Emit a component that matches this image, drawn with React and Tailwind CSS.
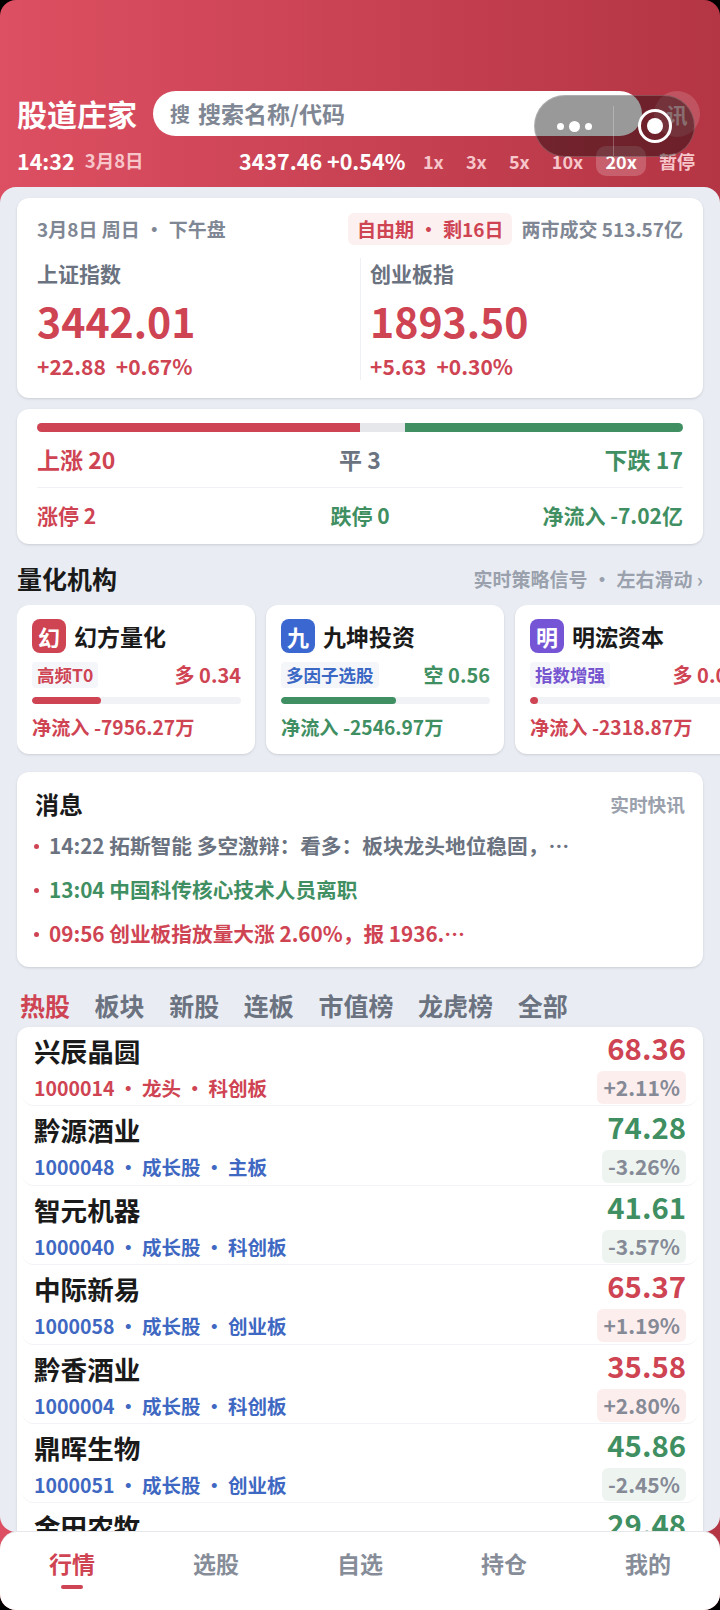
import React from 'react';

const RED = 'text-[#cf4453]';
const GREEN = 'text-[#3f8f62]';

const speeds = ['1x', '3x', '5x', '10x', '20x', '暂停'];

const funds = [
  { icon: '幻', iconBg: 'bg-[#cf4453]', name: '幻方量化', tag: '高频T0', tagText: 'text-[#cf4453]', signal: '多 0.34', signalText: RED, barBg: 'bg-[#cf4453]', bar: '33%', flow: '净流入 -7956.27万', flowText: RED },
  { icon: '九', iconBg: 'bg-[#3b68d0]', name: '九坤投资', tag: '多因子选股', tagText: 'text-[#3b68c4]', signal: '空 0.56', signalText: GREEN, barBg: 'bg-[#3f8f62]', bar: '55%', flow: '净流入 -2546.97万', flowText: GREEN },
  { icon: '明', iconBg: 'bg-[#7555d6]', name: '明浤资本', tag: '指数增强', tagText: 'text-[#7555d0]', signal: '多 0.08', signalText: RED, barBg: 'bg-[#cf4453]', bar: '4%', flow: '净流入 -2318.87万', flowText: RED },
];

const news = [
  { text: '14:22 拓斯智能 多空激辩：看多：板块龙头地位稳固，…', color: 'text-[#6b7280]' },
  { text: '13:04 中国科传核心技术人员离职', color: GREEN },
  { text: '09:56 创业板指放量大涨 2.60%，报 1936.…', color: RED },
];

const tabs = ['热股', '板块', '新股', '连板', '市值榜', '龙虎榜', '全部'];

const stocks = [
  { name: '兴辰晶圆', code: '1000014', tags: ['龙头', '科创板'], price: '68.36', pct: '+2.11%', up: true, lead: true },
  { name: '黔源酒业', code: '1000048', tags: ['成长股', '主板'], price: '74.28', pct: '-3.26%', up: false },
  { name: '智元机器', code: '1000040', tags: ['成长股', '科创板'], price: '41.61', pct: '-3.57%', up: false },
  { name: '中际新易', code: '1000058', tags: ['成长股', '创业板'], price: '65.37', pct: '+1.19%', up: true },
  { name: '黔香酒业', code: '1000004', tags: ['成长股', '科创板'], price: '35.58', pct: '+2.80%', up: true },
  { name: '鼎晖生物', code: '1000051', tags: ['成长股', '创业板'], price: '45.86', pct: '-2.45%', up: false },
  { name: '金田农牧', code: '1000033', tags: ['成长股', '主板'], price: '29.48', pct: '-1.32%', up: false },
];

const navItems = ['行情', '选股', '自选', '持仓', '我的'];

const IndexCell = ({ title, value, change, pct, className }) => (
  <div className={`flex flex-col ${className}`}>
    <div className="mt-[1px] text-[21px] leading-[28px] font-semibold text-[#6b7280]">{title}</div>
    <div className={`mt-[7px] text-[41px] leading-[52px] font-bold ${RED}`}>{value}</div>
    <div className={`mt-[6px] flex gap-[10px] text-[21px] leading-[28px] font-semibold ${RED}`}>
      <span>{change}</span>
      <span>{pct}</span>
    </div>
  </div>
);

const FundCard = ({ fund }) => (
  <div className="shrink-0 w-[238px] h-[149px] bg-white rounded-[12px] pl-[15px] pr-[14px] pt-[14px] shadow-sm">
    <div className="flex items-center gap-[8px]">
      <div className={`w-[34px] h-[34px] rounded-[8px] flex items-center justify-center text-white text-[22px] font-bold ${fund.iconBg}`}>{fund.icon}</div>
      <div className="text-[23px] leading-[34px] font-bold text-[#1a1a1a]">{fund.name}</div>
    </div>
    <div className="mt-[9px] flex items-center justify-between">
      <span className={`px-[5px] h-[26px] leading-[26px] rounded-[4px] bg-[#f5f6fa] text-[17.5px] font-semibold ${fund.tagText}`}>{fund.tag}</span>
      <span className={`text-[20px] leading-[26px] font-semibold ${fund.signalText}`}>{fund.signal}</span>
    </div>
    <div className="mt-[9px] h-[7px] rounded-full bg-[#f1f2f6] overflow-hidden">
      <div className={`h-full rounded-full ${fund.barBg}`} style={{ width: fund.bar }} />
    </div>
    <div className={`mt-[9px] text-[19.2px] leading-[28px] font-semibold ${fund.flowText}`}>{fund.flow}</div>
  </div>
);

const StockRow = ({ stock }) => (
  <div className="h-[79.4px] shrink-0 mx-[5px] px-[12px] flex justify-between border-b border-[#f1f3f6] rounded-b-[12px]">
    <div className="flex flex-col">
      <div className="mt-[6px] text-[26.6px] leading-[36px] font-bold text-[#1a1a1a]">{stock.name}</div>
      <div className={`mt-[6px] text-[19.5px] leading-[26px] font-semibold ${stock.lead ? RED : 'text-[#3f68c2]'}`}>
        {stock.code}
        {stock.tags.map((tag) => (
          <span key={tag}><span className="mx-[4px]">·</span>{tag}</span>
        ))}
      </div>
    </div>
    <div className="flex flex-col items-end">
      <div className="h-[44px]">
        <div className={`text-[29.3px] leading-[40px] font-bold ${stock.up ? RED : GREEN}`}>{stock.price}</div>
      </div>
      <div className={`h-[33px] px-[6px] rounded-[6px] text-[21px] leading-[33px] font-semibold text-[#858a96] ${stock.up ? 'bg-[#fdeeee]' : 'bg-[#eef5f1]'}`}>{stock.pct}</div>
    </div>
  </div>
);

export default function App() {
  return (
    <div className="w-[720px] h-[1610px] bg-black overflow-hidden" style={{ fontFamily: '"Noto Sans CJK SC", "Noto Sans", sans-serif' }}>
      <div className="relative h-full flex flex-col overflow-hidden rounded-[16px] bg-gradient-to-r from-[#dd4f62] to-[#b43544]">
        {/* header */}
        <div className="shrink-0 h-[187px] pl-[17px] pr-[25px] pt-[91px]">
          <div className="flex items-center h-[45px] -mr-[25px]">
            <div className="shrink-0 w-[136px] text-[30px] leading-[45px] font-bold text-white">股道庄家</div>
            <div className="shrink-0 w-[489px] h-[45px] bg-white rounded-full flex items-center px-[17px] gap-[8px] text-[#7f8794] font-semibold">
              <span className="text-[20px]">搜</span>
              <span className="text-[23px]">搜索名称/代码</span>
            </div>
            <div className="shrink-0 ml-[12px] w-[46px] h-[46px] rounded-full bg-white/15 flex items-center justify-center text-[21px] font-semibold text-white/60">
              <span className="mt-[3px]">讯</span>
            </div>
          </div>
          <div className="mt-[10px] flex items-center h-[30px]">
            <div className="w-[222px] flex items-center">
              <span className="text-[21.5px] font-bold text-white">14:32</span>
              <span className="ml-[10px] text-[18.5px] font-semibold text-[#f6c6cb]">3月8日</span>
            </div>
            <span className="w-[184px] text-[21.5px] font-bold text-white whitespace-nowrap">3437.46 +0.54%</span>
            <div className="flex-1 flex items-center justify-between">
              {speeds.map((s) => (
                <span key={s} className={s === '20x' ? 'h-[30px] leading-[30px] px-[9px] -mx-[9px] rounded-[10px] bg-white/20 text-[18px] font-semibold text-white' : 'text-[18px] font-semibold text-[#f6c6cb]'}>{s}</span>
              ))}
            </div>
          </div>
        </div>

        {/* main panel */}
        <div className="shrink-0 h-[1345px] overflow-hidden rounded-[16px] bg-[#e9edf3] pt-[11px] px-[17px] flex flex-col">
          <div className="shrink-0 h-[200px] bg-white rounded-[12px] px-[20px] pt-[15px] shadow-sm">
            <div className="flex items-center justify-between h-[32px] text-[19px] font-semibold text-[#7f8794]">
              <span>3月8日 周日<span className="mx-[5px]">·</span>下午盘</span>
              <div className="flex items-center gap-[9px]">
                <span className={`px-[9px] h-[32px] leading-[32px] rounded-[6px] bg-[#fdf0f1] ${RED}`}>自由期<span className="mx-[5px]">·</span>剩16日</span>
                <span>两市成交 513.57亿</span>
              </div>
            </div>
            <div className="mt-[13px] flex">
              <IndexCell title="上证指数" value="3442.01" change="+22.88" pct="+0.67%" className="w-[323px]" />
              <div className="w-px bg-[#eef0f3]" />
              <IndexCell title="创业板指" value="1893.50" change="+5.63" pct="+0.30%" className="flex-1 pl-[9px]" />
            </div>
          </div>

          <div className="shrink-0 mt-[11px] h-[135px] bg-white rounded-[12px] px-[20px] pt-[14px] shadow-sm">
            <div className="flex h-[9px] rounded-full overflow-hidden">
              <div className="w-[323px] bg-[#cf4453]" />
              <div className="w-[45px] bg-[#e5e7eb]" />
              <div className="flex-1 bg-[#3f8f62]" />
            </div>
            <div className="mt-[10px] h-[32px] grid grid-cols-3 items-center text-[23px] font-semibold">
              <span className={RED}>上涨 20</span>
              <span className="text-[#6b7280] text-center">平 3</span>
              <span className={`${GREEN} text-right`}>下跌 17</span>
            </div>
            <div className="mt-[13px] border-t border-[#f0f1f4] pt-[11px] h-[45px] grid grid-cols-3 items-center text-[21px] font-semibold whitespace-nowrap">
              <span className={RED}>涨停 2</span>
              <span className={`${GREEN} text-center`}>跌停 0</span>
              <span className={`${GREEN} text-right`}>净流入 -7.02亿</span>
            </div>
          </div>

          <div className="shrink-0 mt-[17px] h-[36px] flex items-center justify-between">
            <span className="text-[25px] font-bold text-[#1a1a1a]">量化机构</span>
            <span className="text-[19px] font-semibold text-[#9aa1ad]">实时策略信号<span className="mx-[5px]">·</span>左右滑动 ›</span>
          </div>

          <div className="shrink-0 mt-[8px] flex gap-[11px] -mr-[17px] overflow-hidden pb-[4px]">
            {funds.map((f) => (
              <FundCard key={f.name} fund={f} />
            ))}
          </div>

          <div className="shrink-0 mt-[14px] h-[195px] bg-white rounded-[12px] px-[18px] pt-[16px] shadow-sm">
            <div className="flex items-center justify-between h-[32px]">
              <span className="text-[24px] font-bold text-[#1a1a1a]">消息</span>
              <span className="text-[18.7px] font-semibold text-[#9aa1ad]">实时快讯</span>
            </div>
            <div className="mt-[12px] flex flex-col gap-[16px]">
              {news.map((n) => (
                <div key={n.text} className={`flex items-center h-[28px] text-[20.7px] font-semibold ${n.color}`}>
                  <span className="w-[5px] h-[5px] rounded-full bg-[#cf4453] ml-[-1px] mr-[10px]" />
                  {n.text}
                </div>
              ))}
            </div>
          </div>

          <div className="shrink-0 mt-[21px] pl-[3px] h-[36px] flex items-center gap-[24.6px] text-[25px] font-semibold text-[#6b7280]">
            {tabs.map((t, i) => (
              <span key={t} className={i === 0 ? RED : ''}>{t}</span>
            ))}
          </div>

          <div className="shrink-0 mt-[3px] bg-white rounded-[12px] flex flex-col shadow-sm">
            {stocks.map((s) => (
              <StockRow key={s.name} stock={s} />
            ))}
          </div>
        </div>

        {/* bottom nav */}
        <div className="shrink-0 h-[79px] -mt-[1px] z-10 rounded-t-[18px] bg-white border-t border-[#e5e7eb] flex">
          {navItems.map((item, i) => (
            <div key={item} className="relative flex-1 flex justify-center pt-[15px]">
              <span className={`text-[23px] leading-[32px] font-semibold ${i === 0 ? RED : 'text-[#868d99]'}`}>{item}</span>
              {i === 0 && <span className="absolute top-[53px] w-[22px] h-[4px] rounded-full bg-[#cf4453]" />}
            </div>
          ))}
        </div>

        {/* wechat capsule over the page */}
        <div className="absolute left-[534px] top-[95px] w-[161px] h-[62px] rounded-full bg-black/40 border border-white/20 flex items-center">
          <div className="w-[78px] flex items-center justify-center gap-[5px]">
            <span className="w-[7px] h-[7px] rounded-full bg-white" />
            <span className="w-[11px] h-[11px] rounded-full bg-white" />
            <span className="w-[7px] h-[7px] rounded-full bg-white" />
          </div>
          <div className="w-px h-[50px] mt-[10px] bg-white/25" />
          <div className="ml-[24px] w-[34px] h-[34px] rounded-full border-[3px] border-white flex items-center justify-center">
            <span className="w-[16px] h-[16px] rounded-full bg-white" />
          </div>
        </div>
      </div>
    </div>
  );
}
